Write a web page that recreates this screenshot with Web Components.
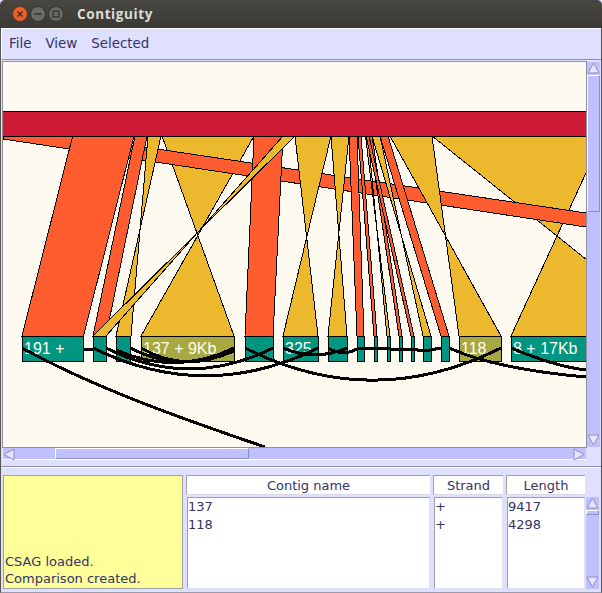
<!DOCTYPE html>
<html>
<head>
<meta charset="utf-8">
<title>Contiguity</title>
<style>
html, body { margin: 0; padding: 0; background: #dfdfff; }
body { width: 602px; height: 593px; overflow: hidden; font-family: "DejaVu Sans", sans-serif; color: #333366; }
</style>
</head>
<body>
<contig-window>
    <window-titlebar slot="title">Contiguity</window-titlebar>
    <menu-bar>
        <span>File</span>
        <span>View</span>
        <span>Selected</span>
    </menu-bar>
    <contig-view></contig-view>
    <split-bar></split-bar>
    <bottom-panel>
        <message-box>CSAG loaded.<br>Comparison created.</message-box>
        <data-column label="Contig name" wide>137<br>118</data-column>
        <data-column label="Strand" style="width:70px">+<br>+</data-column>
        <data-column label="Length" style="width:79px">9417<br>4298</data-column>
        <metal-scrollbar orient="list"></metal-scrollbar>
    </bottom-panel>
</contig-window>

<script>
class ContigWindow extends HTMLElement {
    constructor() {
        super();
        this.attachShadow({ mode: 'open' });
        this.shadowRoot.innerHTML = `
        <style>
            :host { display: flex; flex-direction: column; width: 602px; height: 593px; background: #dfdfff; }
            .frame {
                display: flex; flex-direction: column; flex: 1; min-height: 0;
                border-left: 1px solid #55544f;
                border-right: 1px solid #55544f;
                border-bottom: 1px solid #9a9aa8;
            }
        </style>
        <slot name="title"></slot>
        <div class="frame"><slot></slot></div>
        `;
    }
}

class WindowTitlebar extends HTMLElement {
    constructor() {
        super();
        this.attachShadow({ mode: 'open' });
        this.shadowRoot.innerHTML = `
        <style>
            :host {
                display: flex; align-items: center; height: 28px; flex: none;
                background: linear-gradient(#47463f, #3a3935);
                border-radius: 5px 5px 0 0;
                font: bold 13.5px "Open Sans", sans-serif;
                letter-spacing: .6px;
                color: #dfdbd2;
            }
            .btns { display: flex; gap: 2px; padding-left: 12px; width: 77px; box-sizing: border-box; }
            svg { display: block; }
        </style>
        <div class="btns">
            <svg width="16" height="16" viewBox="0 0 16 16">
                <circle cx="8" cy="8" r="7.5" fill="#e9602a" stroke="#5a3a28"/>
                <path d="M5.5 5.5l5 5M10.5 5.5l-5 5" stroke="#3a2a22" stroke-width="1.3"/>
            </svg>
            <svg width="16" height="16" viewBox="0 0 16 16">
                <circle cx="8" cy="8" r="7.5" fill="#6b6a64" stroke="#33322e"/>
                <path d="M4.5 8h7" stroke="#35342f" stroke-width="1.6"/>
            </svg>
            <svg width="16" height="16" viewBox="0 0 16 16">
                <circle cx="8" cy="8" r="7.5" fill="#6b6a64" stroke="#33322e"/>
                <rect x="5" y="5" width="6" height="6" fill="none" stroke="#35342f" stroke-width="1.3"/>
            </svg>
        </div>
        <slot></slot>
        `;
    }
}

class MenuBar extends HTMLElement {
    constructor() {
        super();
        this.attachShadow({ mode: 'open' });
        this.shadowRoot.innerHTML = `
        <style>
            :host {
                display: flex; align-items: center; gap: 14px; flex: none;
                height: 32px; box-sizing: border-box; padding: 0 0 1px 7px;
                background: #dfdfff;
                border-top: 1px solid #fff;
                border-left: 1px solid #fff;
                border-bottom: 1px solid #8f8fbd;
                font-size: 13.4px;
                color: #333366;
            }
        </style>
        <slot></slot>
        `;
    }
}

// bands are top left, top right, partner of top left, partner of top right.
// crossing partners make the bowties
const BANDS = [
    [432, 603, 682, 511, 'y'],
    [162, 254, 234, 141, 'y'],
    ['diag'],
    [135, 147, 93, 106, 'o'],
    [148, 161, 131, 116, 'y'],
    [72.7, 134, 22, 83.5, 'o'],
    [254, 283, 245, 273, 'o'],
    [295, 331, 318, 283, 'y'],
    [331, 349, 347, 328, 'y'],
    [283, 295, 106, 93, 'y'],
    [349, 357, 357, 364, 'o'],
    [358, 361, 374, 377, 'o'],
    [368, 365.5, 387, 390, 'y'],
    [369, 372, 399, 402, 'o'],
    [366, 369, 411, 414, 'o'],
    [380, 372, 423, 431, 'y'],
    [380, 388, 441, 449, 'o'],
    [432, 390, 459, 501, 'y']
];

const BLOCKS = [
    [22, 83.5], [93, 106], [116, 130], [141, 234, 1], [245, 273], [283, 318], [328, 347],
    [357, 364], [374, 377], [387, 390], [399, 402], [411, 414], [423, 431], [441, 449],
    [459, 501, 1], [511, 600]
];

const LABELS = [
    [24, '191 +'], [143, '137 + 9Kb'], [285, '325'], [461, '118'], [513, '8 + 17Kb']
];

const LINKS = [
    'M22 348C95 388 180 418 265 447',
    'M83 349H93',
    'M93 348C168 385 243 385 318 348',
    'M106 348C162 376 217 376 273 348',
    'M116 350C155 367 195 367 234 348',
    'M130 348C165 366 200 366 234 351',
    'M141 348C172 366 203 366 234 350',
    'M245 348C330 391 415 391 501 348',
    'M283 348C304 357 326 357 347 348',
    'M328 348C338 354 348 354 357 349',
    'M357 349L370 348L390 349L410 349L425 351L441 348',
    'M449 348C480 362 530 372 586 377',
    'M511 348C535 358 560 367 586 370'
];

class ContigView extends HTMLElement {
    constructor() {
        super();
        this.attachShadow({ mode: 'open' });
        const colors = { y: '#ebb82e', o: '#ff5c30' };
        const bands = BANDS.map(b => {
            if (b[0] === 'diag') {
                return `<polygon points="3,126 586,213 586,227 3,139" fill="#ff5c30" stroke="#000"/>`;
            }
            return `<polygon points="${b[0]},136 ${b[1]},136 ${b[3]},336 ${b[2]},336" fill="${colors[b[4]]}" stroke="#000"/>`;
        }).join('');
        const blocks = BLOCKS.map(b =>
            `<rect x="${b[0]}" y="336" width="${b[1] - b[0]}" height="25" fill="${b[2] ? '#a8a842' : '#009682'}" stroke="#000"/>`
        ).join('');
        const labels = LABELS.map(l => `<text x="${l[0]}" y="354">${l[1]}</text>`).join('');
        const links = LINKS.map(d => `<path d="${d}"/>`).join('');
        this.shadowRoot.innerHTML = `
        <style>
            :host {
                display: grid; flex: none;
                grid-template-columns: 583px 14px;
                grid-template-rows: 385px 13px;
                height: 398px; padding: 2px 0 0 2px;
            }
            .pane { background: #fffaf0; overflow: hidden; box-shadow: 0 0 0 1px #8f8f9f; clip-path: inset(-1px -1px -1px -1px); }
            svg { display: block; }
            text { font: 16px "Liberation Sans", sans-serif; fill: #fffff0; }
            .links path { fill: none; stroke: #000; stroke-width: 3; }
            .corner { background: #dfdfff; }
        </style>
        <div class="pane">
            <svg width="583" height="385" viewBox="3 62 583 385">
                <g shape-rendering="crispEdges">${bands}
                    <rect x="2" y="111" width="590" height="25" fill="#cf1b35" stroke="#000"/>
                    ${blocks}
                </g>
                ${labels}
                <g class="links" shape-rendering="crispEdges">${links}</g>
            </svg>
        </div>
        <metal-scrollbar orient="v"></metal-scrollbar>
        <metal-scrollbar orient="h"></metal-scrollbar>
        <div class="corner"></div>
        `;
    }
}

class MetalScrollbar extends HTMLElement {
    constructor() {
        super();
        this.attachShadow({ mode: 'open' });
    }

    arrow(dir) {
        const shapes = {
            up: 'M1 11L6.5 1 12 11Z',
            down: 'M1 1L6.5 11 12 1Z',
            left: 'M11 1L1 6.5 11 12Z',
            right: 'M1 1L11 6.5 1 12Z'
        };
        return `<svg class="arrow" width="13" height="13" viewBox="0 0 13 13"><path d="${shapes[dir]}" fill="#e4e4ff" stroke="#8f8fbd"/></svg>`;
    }

    connectedCallback() {
        const orient = this.getAttribute('orient');
        const horizontal = orient === 'h';
        const first = horizontal ? 'left' : 'up';
        const last = horizontal ? 'right' : 'down';
        let before = 0;
        let thumb = 137;
        if (horizontal) {
            before = 39;
            thumb = 194;
        }
        if (orient === 'list') {
            thumb = 5;
        }
        this.shadowRoot.innerHTML = `
        <style>
            :host {
                display: flex; flex-direction: ${horizontal ? 'row' : 'column'};
                background: #c0c0ff; box-sizing: border-box;
                ${horizontal ? 'border-top: 1px solid #8f8f9f; border-bottom: 1px solid #fff;' : 'border-left: 1px solid #8f8fbd;'}
                ${orient === 'list' ? 'width: 13px; height: 92px; margin: 22px 1px 0 -2px; border-left: 0;' : ''}
            }
            svg.arrow { flex: none; display: block; }
            .gap { flex: none; ${horizontal ? 'width' : 'height'}: ${before}px; }
            .thumb {
                flex: none; box-sizing: border-box;
                ${horizontal ? 'width' : 'height'}: ${thumb}px;
                background: #c0c0ff;
                border: 1px solid #8f8fbd;
                border-top-color: #fff;
                border-left-color: #fff;
            }
            .rest { flex: 1; }
        </style>
        ${this.arrow(first)}
        <div class="gap"></div>
        <div class="thumb"></div>
        <div class="rest"></div>
        ${this.arrow(last)}
        `;
    }
}

class SplitBar extends HTMLElement {
    constructor() {
        super();
        this.attachShadow({ mode: 'open' });
        this.shadowRoot.innerHTML = `
        <style>
            :host { display: block; height: 15px; flex: none; box-sizing: border-box; padding-top: 6px; }
            div { height: 1px; background: #8f8fa8; border-bottom: 1px solid #fff; }
        </style>
        <div></div>
        `;
    }
}

class BottomPanel extends HTMLElement {
    constructor() {
        super();
        this.attachShadow({ mode: 'open' });
        this.shadowRoot.innerHTML = `
        <style>
            :host { display: flex; flex: 1; gap: 3px; padding: 0 1px 3px 2px; min-height: 0; font-size: 13px; color: #333366; }
        </style>
        <slot></slot>
        `;
    }
}

class MessageBox extends HTMLElement {
    constructor() {
        super();
        this.attachShadow({ mode: 'open' });
        this.shadowRoot.innerHTML = `
        <style>
            :host {
                display: flex; align-items: flex-end; flex: none;
                width: 180px; box-sizing: border-box;
                background: #ffff99;
                border: 1px solid #a0a0a0;
                padding: 0 2px 1px 1px;
                line-height: 17px;
            }
        </style>
        <div><slot></slot></div>
        `;
    }
}

class DataColumn extends HTMLElement {
    constructor() {
        super();
        this.attachShadow({ mode: 'open' });
    }

    connectedCallback() {
        this.shadowRoot.innerHTML = `
        <style>
            :host {
                display: flex; flex-direction: column; gap: 2px;
                flex: ${this.hasAttribute('wide') ? '1' : 'none'};
                line-height: 18px;
            }
            .head {
                height: 20px; box-sizing: border-box; text-align: center;
                background: #fff;
                border-top: 1px solid #a0a0a0;
                border-left: 1px solid #a0a0a0;
                line-height: 19px;
                border-bottom: 1px solid #d8d8e8;
            }
            .list {
                flex: 1; background: #fff; margin-left: 1px;
                box-sizing: border-box;
                border: 1px solid #a0a0a0;
                border-right-color: #dfdfef;
                border-bottom-color: #dfdfef;
            }
        </style>
        <div class="head">${this.getAttribute('label')}</div>
        <div class="list"><slot></slot></div>
        `;
    }
}

customElements.define('contig-window', ContigWindow);
customElements.define('window-titlebar', WindowTitlebar);
customElements.define('menu-bar', MenuBar);
customElements.define('contig-view', ContigView);
customElements.define('metal-scrollbar', MetalScrollbar);
customElements.define('split-bar', SplitBar);
customElements.define('bottom-panel', BottomPanel);
customElements.define('message-box', MessageBox);
customElements.define('data-column', DataColumn);
</script>
</body>
</html>
